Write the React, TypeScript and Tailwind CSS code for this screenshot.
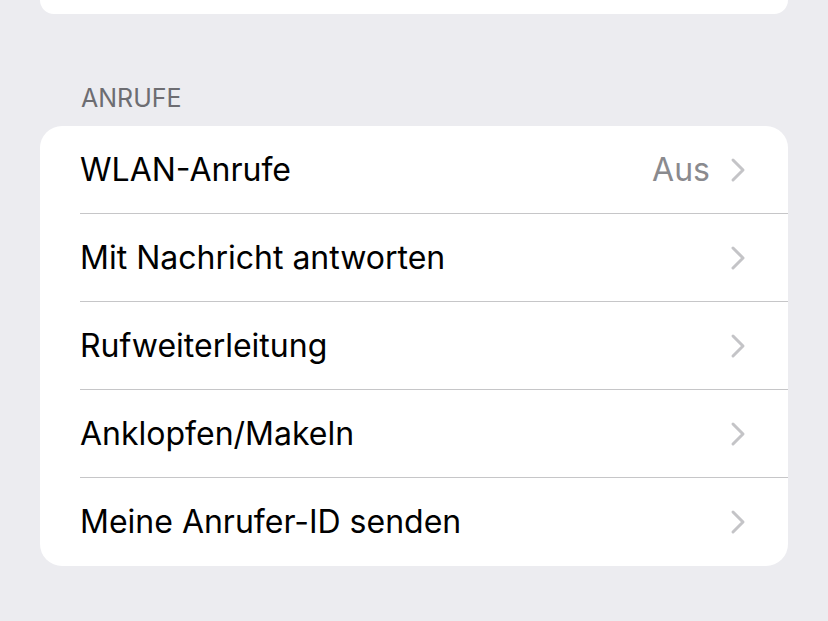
const rows = [
  { label: 'WLAN-Anrufe', value: 'Aus' },
  { label: 'Mit Nachricht antworten' },
  { label: 'Rufweiterleitung' },
  { label: 'Anklopfen/Makeln' },
  { label: 'Meine Anrufer-ID senden' },
];

const Chevron = () => (
  <svg width="16" height="26" viewBox="0 0 16 26" fill="none" className="shrink-0">
    <path d="M3 3l10 10-10 10" stroke="#c4c4c7" strokeWidth="3" strokeLinecap="round" strokeLinejoin="round" />
  </svg>
);

export default function App() {
  return (
    <div
      className="w-[828px] h-[621px] overflow-hidden bg-[#ececf0] px-10"
      style={{ fontFamily: 'Inter, "Noto Sans", sans-serif' }}
    >
      <div className="h-[14px] bg-white rounded-b-[22px]" />

      <div className="pt-[71px] pb-[15px] pl-[41px] text-[25px] leading-[26px] text-[#6d6d72]">
        ANRUFE
      </div>

      <div className="bg-white rounded-[22px] overflow-hidden">
        {rows.map((row, i) => (
          <div key={row.label} className="pl-10">
            <div
              className={`h-[88px] flex items-center pr-[42px] ${
                i < rows.length - 1 ? 'border-b border-[#c6c6c8]' : ''
              }`}
            >
              <span className="flex-1 text-[32px] text-black">{row.label}</span>
              {row.value && (
                <span className="text-[32px] text-[#8a8a8e] mr-[20px]">{row.value}</span>
              )}
              <Chevron />
            </div>
          </div>
        ))}
      </div>
    </div>
  );
}
